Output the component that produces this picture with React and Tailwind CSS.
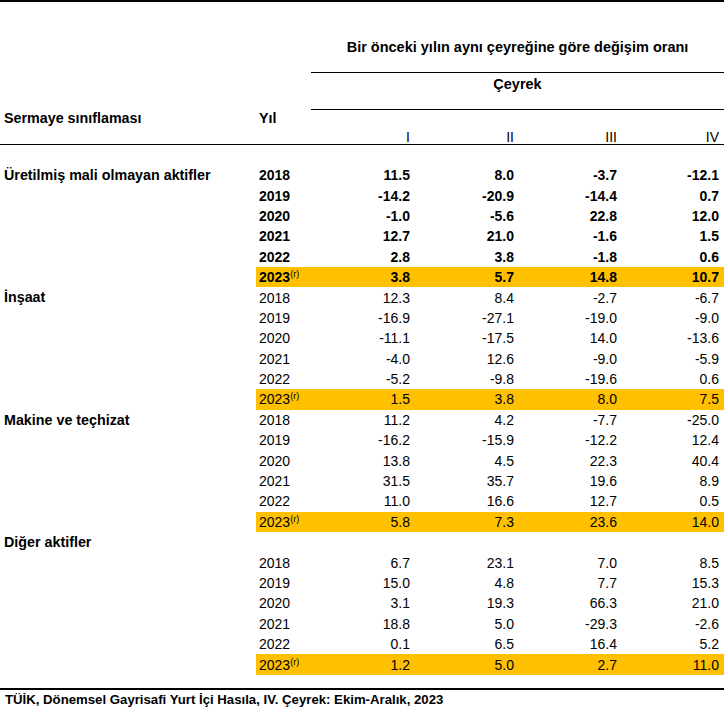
const GROUPS = [
  {
    label: 'Üretilmiş mali olmayan aktifler',
    bold: true,
    rows: [
      ['2018', '11.5', '8.0', '-3.7', '-12.1'],
      ['2019', '-14.2', '-20.9', '-14.4', '0.7'],
      ['2020', '-1.0', '-5.6', '22.8', '12.0'],
      ['2021', '12.7', '21.0', '-1.6', '1.5'],
      ['2022', '2.8', '3.8', '-1.8', '0.6'],
      ['2023', '3.8', '5.7', '14.8', '10.7'],
    ],
  },
  {
    label: 'İnşaat',
    rows: [
      ['2018', '12.3', '8.4', '-2.7', '-6.7'],
      ['2019', '-16.9', '-27.1', '-19.0', '-9.0'],
      ['2020', '-11.1', '-17.5', '14.0', '-13.6'],
      ['2021', '-4.0', '12.6', '-9.0', '-5.9'],
      ['2022', '-5.2', '-9.8', '-19.6', '0.6'],
      ['2023', '1.5', '3.8', '8.0', '7.5'],
    ],
  },
  {
    label: 'Makine ve teçhizat',
    rows: [
      ['2018', '11.2', '4.2', '-7.7', '-25.0'],
      ['2019', '-16.2', '-15.9', '-12.2', '12.4'],
      ['2020', '13.8', '4.5', '22.3', '40.4'],
      ['2021', '31.5', '35.7', '19.6', '8.9'],
      ['2022', '11.0', '16.6', '12.7', '0.5'],
      ['2023', '5.8', '7.3', '23.6', '14.0'],
    ],
  },
  {
    label: 'Diğer aktifler',
    ownRow: true,
    rows: [
      ['2018', '6.7', '23.1', '7.0', '8.5'],
      ['2019', '15.0', '4.8', '7.7', '15.3'],
      ['2020', '3.1', '19.3', '66.3', '21.0'],
      ['2021', '18.8', '5.0', '-29.3', '-2.6'],
      ['2022', '0.1', '6.5', '16.4', '5.2'],
      ['2023', '1.2', '5.0', '2.7', '11.0'],
    ],
  },
];

function DataRow({ label, row, bold }) {
  const last = row[0] === '2023';
  return (
    <div className="grid grid-cols-[256px_468px] h-[20.4px] items-center leading-none">
      <div className="pl-1 font-bold whitespace-nowrap text-[14.3px]">{label}</div>
      <div className={`grid grid-cols-[55px_102px_104px_103px_104px] h-full items-center ${last ? 'bg-[#ffc000]' : ''} ${bold ? 'font-bold' : ''}`}>
        <div className="pl-[3px] whitespace-nowrap">
          {row[0]}
          {last && <span className="relative -top-[5px] text-[9px] font-normal">(r)</span>}
        </div>
        <div className="text-right pr-[3px]">{row[1]}</div>
        <div className="text-right pr-[3px]">{row[2]}</div>
        <div className="text-right pr-[3px]">{row[3]}</div>
        <div className="text-right pr-[5px]">{row[4]}</div>
      </div>
    </div>
  );
}

export default function App() {
  return (
    <div className="w-[724px] h-[710px] bg-white text-black text-[14px] overflow-hidden" style={{ fontFamily: '"Liberation Sans", Arial, sans-serif' }}>
      <div className="border-t-2 border-black">
        {/* header */}
        <div className="flex h-[71px]">
          <div className="w-[311px]" />
          <div className="flex-1 border-b border-black flex items-end justify-center pb-[17px] font-bold text-[14.5px] leading-4">
            Bir önceki yılın aynı çeyreğine göre değişim oranı
          </div>
        </div>
        <div className="flex h-[37px]">
          <div className="w-[311px]" />
          <div className="flex-1 border-b border-black text-center pt-[3px] font-bold text-[14.5px] leading-4">Çeyrek</div>
        </div>
        <div className="grid grid-cols-[256px_55px_102px_104px_103px_104px] h-[35px] border-b border-black">
          <div className="pl-1 font-bold text-[14.3px] leading-4">Sermaye sınıflaması</div>
          <div className="pl-[3px] font-bold text-[14.3px] leading-4">Yıl</div>
          <div className="self-end text-right pr-[3px] leading-[14px]">I</div>
          <div className="self-end text-right pr-[3px] leading-[14px]">II</div>
          <div className="self-end text-right pr-[3px] leading-[14px]">III</div>
          <div className="self-end text-right pr-[5px] leading-[14px]">IV</div>
        </div>

        {/* body */}
        <div className="pt-5">
          {GROUPS.map((g) => (
            <div key={g.label}>
              {g.ownRow && (
                <div className="h-[20.4px] flex items-center pl-1 font-bold text-[14.3px] leading-none">{g.label}</div>
              )}
              {g.rows.map((r, i) => (
                <DataRow key={r[0]} row={r} bold={g.bold} label={!g.ownRow && i === 0 ? g.label : ''} />
              ))}
            </div>
          ))}
        </div>

        {/* footer */}
        <div className="mt-[13px] border-t-2 border-black pl-[5px] text-[13.2px] font-bold leading-5">
          TÜİK, Dönemsel Gayrisafi Yurt İçi Hasıla, IV. Çeyrek: Ekim-Aralık, 2023
        </div>
      </div>
    </div>
  );
}
